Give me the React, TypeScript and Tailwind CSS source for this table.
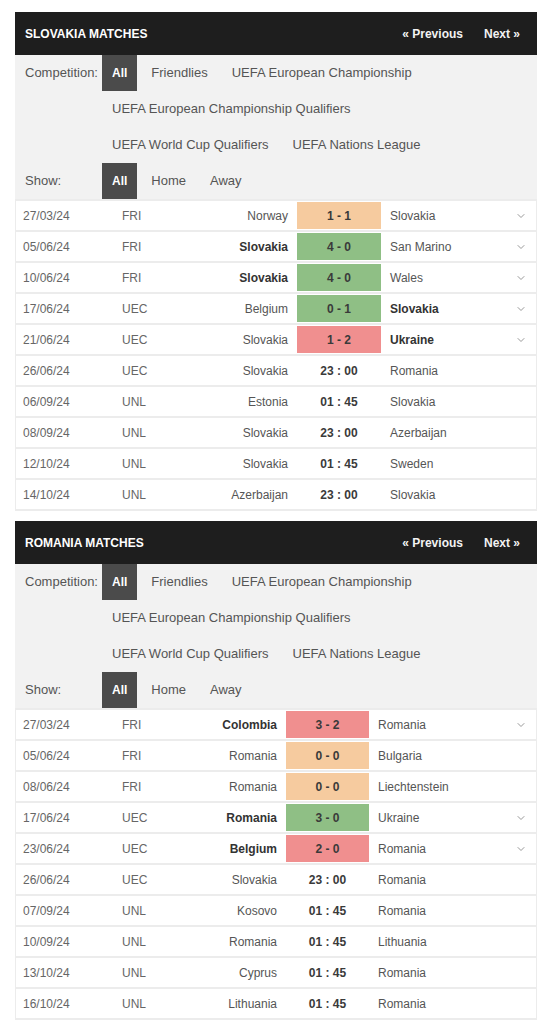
import React from 'react';
import { ChevronDown } from 'lucide-react';

type Match = {
  date: string;
  comp: string;
  home: string;
  away: string;
  score: string;
  result?: 'W' | 'D' | 'L';
  bold?: 'home' | 'away';
  more?: boolean;
};

const slovakia: Match[] = [
  { date: '27/03/24', comp: 'FRI', home: 'Norway', away: 'Slovakia', score: '1 - 1', result: 'D', more: true },
  { date: '05/06/24', comp: 'FRI', home: 'Slovakia', away: 'San Marino', score: '4 - 0', result: 'W', bold: 'home', more: true },
  { date: '10/06/24', comp: 'FRI', home: 'Slovakia', away: 'Wales', score: '4 - 0', result: 'W', bold: 'home', more: true },
  { date: '17/06/24', comp: 'UEC', home: 'Belgium', away: 'Slovakia', score: '0 - 1', result: 'W', bold: 'away', more: true },
  { date: '21/06/24', comp: 'UEC', home: 'Slovakia', away: 'Ukraine', score: '1 - 2', result: 'L', bold: 'away', more: true },
  { date: '26/06/24', comp: 'UEC', home: 'Slovakia', away: 'Romania', score: '23 : 00' },
  { date: '06/09/24', comp: 'UNL', home: 'Estonia', away: 'Slovakia', score: '01 : 45' },
  { date: '08/09/24', comp: 'UNL', home: 'Slovakia', away: 'Azerbaijan', score: '23 : 00' },
  { date: '12/10/24', comp: 'UNL', home: 'Slovakia', away: 'Sweden', score: '01 : 45' },
  { date: '14/10/24', comp: 'UNL', home: 'Azerbaijan', away: 'Slovakia', score: '23 : 00' },
];

const romania: Match[] = [
  { date: '27/03/24', comp: 'FRI', home: 'Colombia', away: 'Romania', score: '3 - 2', result: 'L', bold: 'home', more: true },
  { date: '05/06/24', comp: 'FRI', home: 'Romania', away: 'Bulgaria', score: '0 - 0', result: 'D' },
  { date: '08/06/24', comp: 'FRI', home: 'Romania', away: 'Liechtenstein', score: '0 - 0', result: 'D' },
  { date: '17/06/24', comp: 'UEC', home: 'Romania', away: 'Ukraine', score: '3 - 0', result: 'W', bold: 'home', more: true },
  { date: '23/06/24', comp: 'UEC', home: 'Belgium', away: 'Romania', score: '2 - 0', result: 'L', bold: 'home', more: true },
  { date: '26/06/24', comp: 'UEC', home: 'Slovakia', away: 'Romania', score: '23 : 00' },
  { date: '07/09/24', comp: 'UNL', home: 'Kosovo', away: 'Romania', score: '01 : 45' },
  { date: '10/09/24', comp: 'UNL', home: 'Romania', away: 'Lithuania', score: '01 : 45' },
  { date: '13/10/24', comp: 'UNL', home: 'Cyprus', away: 'Romania', score: '01 : 45' },
  { date: '16/10/24', comp: 'UNL', home: 'Lithuania', away: 'Romania', score: '01 : 45' },
];

const resultBg = {
  W: 'bg-[#8fbf85]',
  D: 'bg-[#f6cb9f]',
  L: 'bg-[#f08f8f]',
};

const compRows = [
  ['All', 'Friendlies', 'UEFA European Championship'],
  ['UEFA European Championship Qualifiers'],
  ['UEFA World Cup Qualifiers', 'UEFA Nations League'],
];

const Item = ({ label, active }: { label: string; active?: boolean }) => (
  <span
    className={
      active
        ? 'h-9 leading-9 px-[10px] bg-[#4b4b4b] text-white font-bold text-[12px]'
        : 'h-9 leading-9 px-[10px] text-[#555] text-[13px]'
    }
  >
    {label}
  </span>
);

const Panel = ({ title, matches, cols }: { title: string; matches: Match[]; cols: string }) => (
  <div className="w-full">
    <div className="h-[43px] bg-[#1e1e1e] flex items-center justify-between pl-[10px] pr-[17px] text-white text-[12px] font-bold">
      <span>{title}</span>
      <div className="flex gap-[21px] text-[#f2f2f2]">
        <span>« Previous</span>
        <span>Next »</span>
      </div>
    </div>

    <div className="bg-[#f2f2f2] border-b-2 border-[#ececec]">
      <div className="flex">
        <div className="w-[87px] pl-[10px] h-9 leading-9 text-[13px] text-[#555] shrink-0">Competition:</div>
        <div className="flex flex-col">
          {compRows.map((row, i) => (
            <div key={i} className="flex gap-[4px]">
              {row.map((label) => (
                <Item key={label} label={label} active={label === 'All'} />
              ))}
            </div>
          ))}
        </div>
      </div>
      <div className="flex">
        <div className="w-[87px] pl-[10px] h-9 leading-9 text-[13px] text-[#555] shrink-0">Show:</div>
        <div className="flex gap-[4px]">
          <Item label="All" active />
          <Item label="Home" />
          <Item label="Away" />
        </div>
      </div>
    </div>

    <div className="bg-white border-x border-[#ececec]">
      {matches.map((m, i) => (
        <div key={i} className={`grid ${cols} h-[31px] items-center border-b-2 border-[#ececec] text-[12px] text-[#555]`}>
          <span className="pl-[7px] text-[#666]">{m.date}</span>
          <span className="pl-[6px] text-[#666]">{m.comp}</span>
          <span className={`text-right pr-[9px] whitespace-nowrap ${m.bold === 'home' ? 'font-bold text-[#333]' : ''}`}>{m.home}</span>
          <div className="h-full py-[1px]">
            <div
              className={`h-full flex items-center justify-center font-bold text-[#3a3a3a] ${m.result ? resultBg[m.result] : ''}`}
            >
              {m.score}
            </div>
          </div>
          <span className={`pl-[9px] whitespace-nowrap ${m.bold === 'away' ? 'font-bold text-[#333]' : ''}`}>{m.away}</span>
          <span className="flex justify-center">
            {m.more && <ChevronDown size={12} strokeWidth={2} className="text-[#999]" />}
          </span>
        </div>
      ))}
    </div>
  </div>
);

export default function App() {
  return (
    <div className="min-h-screen bg-white pt-3 pl-[15px] pr-[14px] font-['Liberation_Sans',Arial,sans-serif]">
      <Panel title="SLOVAKIA MATCHES" matches={slovakia} cols="grid-cols-[100px_80px_101px_84px_1fr_30px]" />
      <div className="h-[10px]" />
      <Panel title="ROMANIA MATCHES" matches={romania} cols="grid-cols-[100px_80px_90px_83px_1fr_30px]" />
    </div>
  );
}
